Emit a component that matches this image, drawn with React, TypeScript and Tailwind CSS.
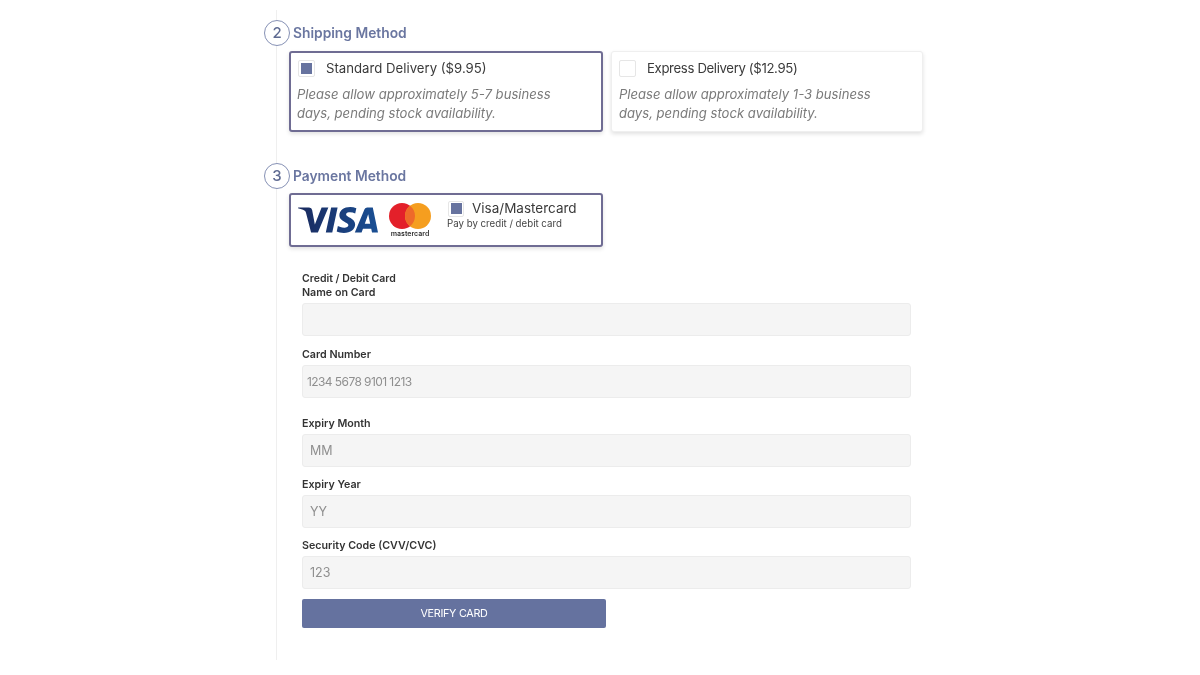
import { SiVisa } from "react-icons/si";

const font = "font-['Inter','Noto_Sans',sans-serif]";

function Step({ n, title }: { n: number; title: string }) {
  return (
    <div className="-ml-[13px] flex h-[26px] items-center gap-[3px]">
      <div className="flex h-[26px] w-[26px] items-center justify-center rounded-full border border-[#8691b5] bg-white text-[15px] font-medium text-[#5f6b92]">
        {n}
      </div>
      <h2 className="text-[13.8px] font-semibold text-[#6a76a0]">{title}</h2>
    </div>
  );
}

function Check({ on, className }: { on?: boolean; className?: string }) {
  return (
    <span
      className={
        "flex shrink-0 items-center justify-center rounded-[2px] border border-[#e6e6e6] bg-white " +
        (className ?? "h-[17px] w-[17px]")
      }
    >
      {on && <span className="h-[11px] w-[11px] bg-[#67739f]" />}
    </span>
  );
}

function Delivery({ on, title, days }: { on?: boolean; title: string; days: string }) {
  return (
    <div
      className={
        "h-[81px] rounded-[3px] bg-white shadow-[0_2px_4px_rgba(0,0,0,0.12)] " +
        (on
          ? "w-[314px] border-2 border-[#6f6c93] pl-[6px] pt-[7px]"
          : "w-[312px] border border-[#efefef] pl-[7px] pt-[8px]")
      }
    >
      <div className={"flex h-[17px] items-center gap-[11px] " + (on ? "pl-[1px]" : "")}>
        <Check on={on} />
        <span className={"text-[13.2px] text-[#3a3a3a] " + (on ? "" : "tracking-[-0.36px]")}>{title}</span>
      </div>
      <p className="mt-[8px] text-[13.1px] italic leading-[19px] text-[#7a7a7a]">
        Please allow approximately {days} business
        <br />
        days, pending stock availability.
      </p>
    </div>
  );
}

function Field({
  label,
  placeholder,
  className,
  digits,
}: {
  label: string;
  placeholder?: string;
  className?: string;
  digits?: boolean;
}) {
  return (
    <div className={className}>
      <div className="text-[10.7px] font-semibold leading-[15px] text-[#333333]">{label}</div>
      <div
        className={
          "mt-[3px] flex h-[33px] w-[609px] items-center rounded-[3px] border border-[#ececec] bg-[#f5f5f5] text-[#8f8f8f] " +
          (digits ? "pl-[4px] text-[12px] tracking-[-0.58px]" : "pl-[7px] pt-[2px] text-[12.5px]")
        }
      >
        {placeholder}
      </div>
    </div>
  );
}

export default function App() {
  return (
    <div className={"h-[675px] w-[1200px] overflow-hidden bg-white blur-[0.5px] " + font}>
      <svg className="absolute h-0 w-0">
        <defs>
          <linearGradient id="visa-grad" x1="0" x2="1" y1="0" y2="0">
            <stop offset="0%" stopColor="#1a2a5e" />
            <stop offset="100%" stopColor="#1a4f94" />
          </linearGradient>
        </defs>
      </svg>
      <main className="ml-[276px] mt-[10px] h-[650px] w-[660px] border-l border-[#efefef] pt-[10px]">
        <Step n={2} title="Shipping Method" />
        <div className="ml-[12px] mt-[5px] flex gap-[8px]">
          <Delivery on title="Standard Delivery ($9.95)" days="5-7" />
          <Delivery title="Express Delivery ($12.95)" days="1-3" />
        </div>

        <div className="mt-[31px]">
          <Step n={3} title="Payment Method" />
        </div>
        <div className="ml-[12px] mt-[4px] flex h-[54px] w-[314px] items-center rounded-[3px] border-2 border-[#6f6c93] bg-white shadow-[0_2px_4px_rgba(0,0,0,0.12)]">
          <SiVisa className="-my-[14px] ml-[7px] h-[80px] w-[80px] shrink-0" fill="url(#visa-grad)" />
          <svg viewBox="0 0 42 34" className="ml-[11px] h-[34px] w-[42px] shrink-0" aria-hidden="true">
            <circle cx="13" cy="13" r="13" fill="#e3202a" />
            <circle cx="29" cy="13" r="13" fill="#f59e1f" />
            <path d="M21 2.75A13 13 0 0 1 21 23.25A13 13 0 0 1 21 2.75z" fill="#ee6a2a" />
            <text x="21" y="32.5" textAnchor="middle" fontSize="7" fontWeight="600" fill="#333333" fontFamily="Inter, sans-serif">
              mastercard
            </text>
          </svg>
          <div className="mb-[9px] ml-[16px]">
            <div className="flex h-[17px] items-center gap-[8px] pl-[1px]">
              <Check on className="h-[16px] w-[16px]" />
              <span className="text-[13.5px] text-[#3a3a3a]">Visa/Mastercard</span>
            </div>
            <div className="text-[9.7px] leading-[14px] text-[#444444]">Pay by credit / debit card</div>
          </div>
        </div>

        <form className="ml-[25px] mt-[24px]">
          <div className="pt-[1px] text-[10.5px] font-semibold leading-[13px] text-[#333333]">Credit / Debit Card</div>
          <Field label="Name on Card" />
          <Field label="Card Number" placeholder="1234 5678 9101 1213" className="mt-[11px]" digits />
          <Field label="Expiry Month" placeholder="MM" className="mt-[18px]" />
          <Field label="Expiry Year" placeholder="YY" className="mt-[10px]" />
          <Field label="Security Code (CVV/CVC)" placeholder="123" className="mt-[10px]" />
          <button
            type="button"
            className="mt-[10px] h-[29px] w-[304px] rounded-[2px] bg-[#65729f] pt-[1px] text-[10.8px] tracking-[-0.3px] text-white"
          >
            VERIFY CARD
          </button>
        </form>
      </main>
    </div>
  );
}
